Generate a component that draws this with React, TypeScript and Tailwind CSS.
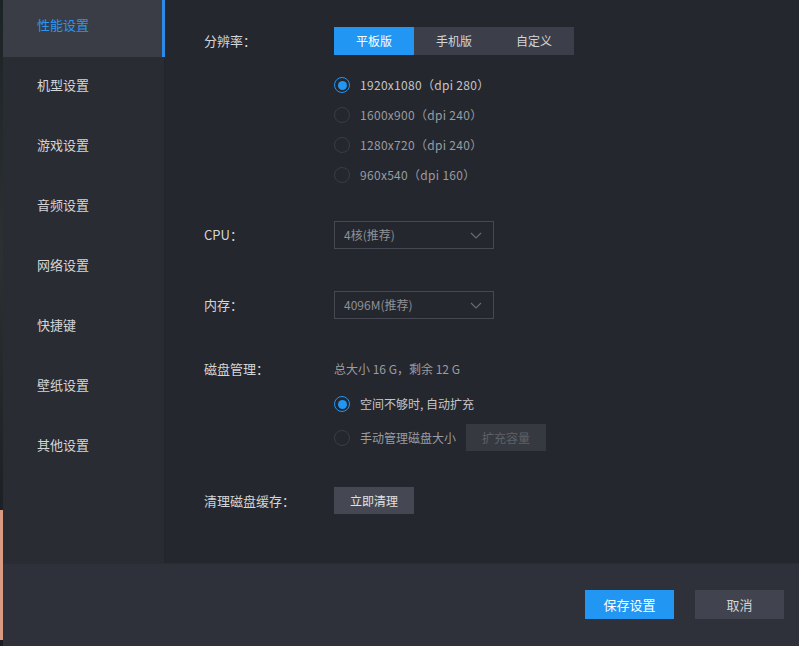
import React from 'react';

const menu = ['性能设置', '机型设置', '游戏设置', '音频设置', '网络设置', '快捷键', '壁纸设置', '其他设置'];

const resolutions = [
  '1920x1080（dpi 280）',
  '1600x900（dpi 240）',
  '1280x720（dpi 240）',
  '960x540（dpi 160）',
];

const Radio = ({ checked }: { checked?: boolean }) =>
  checked ? (
    <span className="w-4 h-4 rounded-full border-[1.5px] border-[#2196f3] flex items-center justify-center shrink-0">
      <span className="w-[9px] h-[9px] rounded-full bg-[#2196f3]" />
    </span>
  ) : (
    <span className="w-4 h-4 rounded-full border-[1.5px] border-[#3a3d45] shrink-0" />
  );

const Select = ({ value }: { value: string }) => (
  <div className="w-[160px] h-[28px] border border-[#464952] flex items-center justify-between pl-[9px] pr-[11px] text-[12px] text-[#8e9096]">
    <span>{value}</span>
    <svg width="12" height="7" viewBox="0 0 12 7" fill="none">
      <polyline points="1,1 6,6 11,1" stroke="#6a6d75" strokeWidth="1.1" />
    </svg>
  </div>
);

const Label = ({ children }: { children: React.ReactNode }) => (
  <div className="w-[130px] shrink-0 text-[13px] text-[#d4d5d8]">{children}</div>
);

export default function App() {
  return (
    <div
      className="w-[799px] h-[646px] flex overflow-hidden bg-[#25272e]"
      style={{ fontFamily: '"Noto Sans CJK SC", "Noto Sans", sans-serif' }}
    >
      {/* sliver of the window behind */}
      <div className="w-[3px] h-full flex flex-col">
        <div className="h-[510px] bg-gradient-to-b from-[#1c2327] via-[#2c3032] to-[#1d2024]" />
        <div className="flex-1 bg-[#d99a82]" />
        <div className="h-[6px] bg-[#1b1d22]" />
      </div>
      <div className="flex-1 flex flex-col">
        <div className="h-[563px] flex">
          {/* sidebar */}
          <div className="w-[162px] bg-[#2a2c33] border-r border-[#23252b] flex flex-col">
            {menu.map((m, i) =>
              i === 0 ? (
                <div key={m} className="h-[57px] mb-[3px] bg-[#3a3d46] flex items-center pl-[34px] pb-[7px] relative text-[13px] text-[#2c95f0]">
                  {m}
                  <span className="absolute right-[-1px] top-0 w-[3px] h-full bg-[#2a8ce8]" />
                </div>
              ) : (
                <div key={m} className="h-[60px] flex items-center pl-[34px] pb-[10px] text-[13px] text-[#d4d5d8]">
                  {m}
                </div>
              )
            )}
          </div>
          {/* content */}
          <div className="flex-1 pl-[39px] pt-[27px]">
            <div className="flex items-center">
              <Label>分辨率：</Label>
              <div className="flex h-[28px] text-[12px]">
                <div className="w-[80px] flex items-center justify-center bg-[#2196f3] text-white">平板版</div>
                <div className="w-[80px] flex items-center justify-center bg-[#3c3f49] text-[#d4d5d8]">手机版</div>
                <div className="w-[80px] flex items-center justify-center bg-[#3c3f49] text-[#d4d5d8]">自定义</div>
              </div>
            </div>
            <div className="mt-[15px] ml-[130px] flex flex-col">
              {resolutions.map((r, i) => (
                <div key={r} className="h-[30px] flex items-center gap-[10px] text-[12px] tracking-[0.3px]">
                  <Radio checked={i === 0} />
                  <span className={i === 0 ? 'text-[#c4c5c9]' : 'text-[#9a9ca1]'}>{r}</span>
                </div>
              ))}
            </div>
            <div className="mt-[31px] flex items-center">
              <Label>CPU：</Label>
              <Select value="4核(推荐)" />
            </div>
            <div className="mt-[42px] flex items-center">
              <Label>内存：</Label>
              <Select value="4096M(推荐)" />
            </div>
            <div className="mt-[40px] h-[20px] flex items-center">
              <Label>磁盘管理：</Label>
              <span className="text-[12px] text-[#9a9ca1]">总大小 16 G，剩余 12 G</span>
            </div>
            <div className="mt-[10px] ml-[130px] h-[30px] flex items-center gap-[10px] text-[12px]">
              <Radio checked />
              <span className="text-[#c4c5c9]">空间不够时, 自动扩充</span>
            </div>
            <div className="mt-[5px] ml-[130px] h-[27px] flex items-center gap-[10px] text-[12px]">
              <Radio />
              <span className="text-[#9a9ca1]">手动管理磁盘大小</span>
              <div className="w-[80px] h-[27px] bg-[#363940] text-[#5e6168] flex items-center justify-center">扩充容量</div>
            </div>
            <div className="mt-[36px] flex items-center">
              <Label>清理磁盘缓存：</Label>
              <div className="w-[80px] h-[27px] bg-[#454852] text-[#e0e1e3] text-[12px] flex items-center justify-center">立即清理</div>
            </div>
          </div>
        </div>
        {/* footer */}
        <div className="flex-1 bg-[#2e3139] border-t border-[#2b2d34] flex justify-end items-start pt-[26px] pr-[15px] gap-[21px] text-[13px]">
          <button className="w-[89px] h-[29px] bg-[#2196f3] text-white">保存设置</button>
          <button className="w-[89px] h-[29px] bg-[#41444e] text-[#d4d5d8]">取消</button>
        </div>
      </div>
    </div>
  );
}
